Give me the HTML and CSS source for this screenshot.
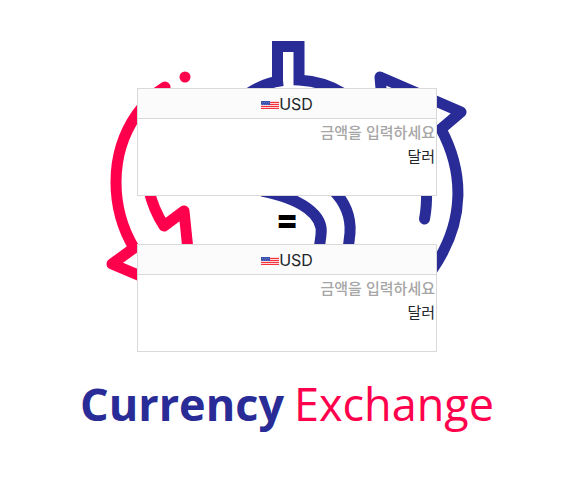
FILE: index.html
```html
<!DOCTYPE html>
<html lang="ko">
<head>
<meta charset="utf-8">
<title>Currency Exchange</title>
<link rel="stylesheet" href="styles.css">
</head>
<body>
<main class="page">
  <svg class="emblem" viewBox="0 0 572 360" width="572" height="360" fill="none" stroke-width="11" stroke-linejoin="round" aria-hidden="true">
    <g stroke="#ff004c">
      <path stroke-linecap="round" d="M165 87C155 93 146 101 137 114C123 134 116 158 116 182C116 207 122 228 134 248L112 264L150 280"/>
      <path d="M149 190C152 204 157 215 164 226L184 211L188 250"/>
      <circle cx="185" cy="77" r="5.5" fill="#ff004c" stroke="none"/>
    </g>
    <g stroke="#292b96">
      <path stroke-linejoin="miter" d="M246 95C256 88 268 82 283 80.500M277.500 84V46.500H299V80C315 81 328 84 342 93"/>
      <path d="M262 191C302 199 324 215 321 235L319 250"/>
      <path d="M333 190C346 203 351 218 350 233L348 250"/>
      <path stroke-linecap="round" d="M426.500 190Q427 206 424.500 219"/>
      <path d="M382 100L380 77L461 112L441 129C463 170 467 220 432 270"/>
    </g>
  </svg>

  <section class="card">
    <button class="currency" type="button">
      <svg class="flag" viewBox="0 0 18 8" width="18" height="8" shape-rendering="crispEdges" aria-hidden="true">
        <path fill="#fbd5d8" d="M0 0h18v8H0z"/>
        <path fill="#f5333f" d="M0 1h18v1H0zM0 3h18v1H0zM0 5h18v1H0zM0 7h18v1H0z"/>
        <path fill="#3c50b0" d="M0 0h9v4H0z"/>
        <path stroke="#6577c4" stroke-dasharray="1 1" d="M1 1.500h8M0 3.500h8"/>
      </svg>USD
    </button>
    <div class="body">
      <input class="amount" type="text" placeholder="금액을 입력하세요" aria-label="금액을 입력하세요">
      <p class="unit">달러</p>
    </div>
  </section>

  <div class="equals">=</div>

  <section class="card">
    <button class="currency" type="button">
      <svg class="flag" viewBox="0 0 18 8" width="18" height="8" shape-rendering="crispEdges" aria-hidden="true">
        <path fill="#fbd5d8" d="M0 0h18v8H0z"/>
        <path fill="#f5333f" d="M0 1h18v1H0zM0 3h18v1H0zM0 5h18v1H0zM0 7h18v1H0z"/>
        <path fill="#3c50b0" d="M0 0h9v4H0z"/>
        <path stroke="#6577c4" stroke-dasharray="1 1" d="M1 1.500h8M0 3.500h8"/>
      </svg>USD
    </button>
    <div class="body">
      <input class="amount" type="text" placeholder="금액을 입력하세요" aria-label="금액을 입력하세요">
      <p class="unit">달러</p>
    </div>
  </section>

  <h1 class="brand"><span class="brand-first">Currency</span><span class="brand-second">Exchange</span></h1>
</main>
</body>
</html>
```
FILE: styles.css
```css
* {
  box-sizing: border-box;
}

body {
  margin: 0;
  background: #fff;
  color: #212529;
  font: 16px/24px Inter, "Noto Sans CJK KR", sans-serif;
}

.page {
  position: relative;
  display: flex;
  flex-direction: column;
  align-items: center;
  padding: 88px 0 40px 2px;
  overflow: hidden;
}

/* Decorative artwork behind the converter */
.emblem {
  position: absolute;
  top: 0;
  left: 50%;
  transform: translateX(-50%);
  z-index: -1;
}

.card {
  width: 100%;
  max-width: 300px;
  min-height: 108px;
  border: 1px solid #d9d9d9;
  background: #fff;
}

.currency {
  display: flex;
  align-items: center;
  justify-content: center;
  width: 100%;
  height: 30px;
  padding: 0;
  border: 0;
  border-bottom: 1px solid #d9d9d9;
  background: #fbfbfb;
  color: #212529;
  font: 16px/24px Inter, sans-serif;
}

.flag {
  margin-top: 3px;
}

.body {
  padding: 0 1px;
}

.amount {
  display: block;
  width: 100%;
  height: 25px;
  padding: 0;
  border: 0;
  background: transparent;
  color: inherit;
  font: 500 15px/24px "Noto Sans CJK KR", sans-serif;
  text-align: right;
}

.amount::placeholder {
  color: #a6a6a6;
}

.unit {
  margin: 0;
  font: 15px/24px "Noto Sans CJK KR", sans-serif;
  text-align: right;
}

.equals {
  color: #000;
  font-size: 32px;
  font-weight: 900;
  line-height: 48px;
}

.brand {
  display: flex;
  gap: 10px;
  margin: 22px 0 0;
  font: 700 45px/60px "Open Sans", sans-serif;
}

.brand-first {
  color: #292b96;
}

.brand-second {
  color: #ff004c;
  font-weight: 400;
}
```
